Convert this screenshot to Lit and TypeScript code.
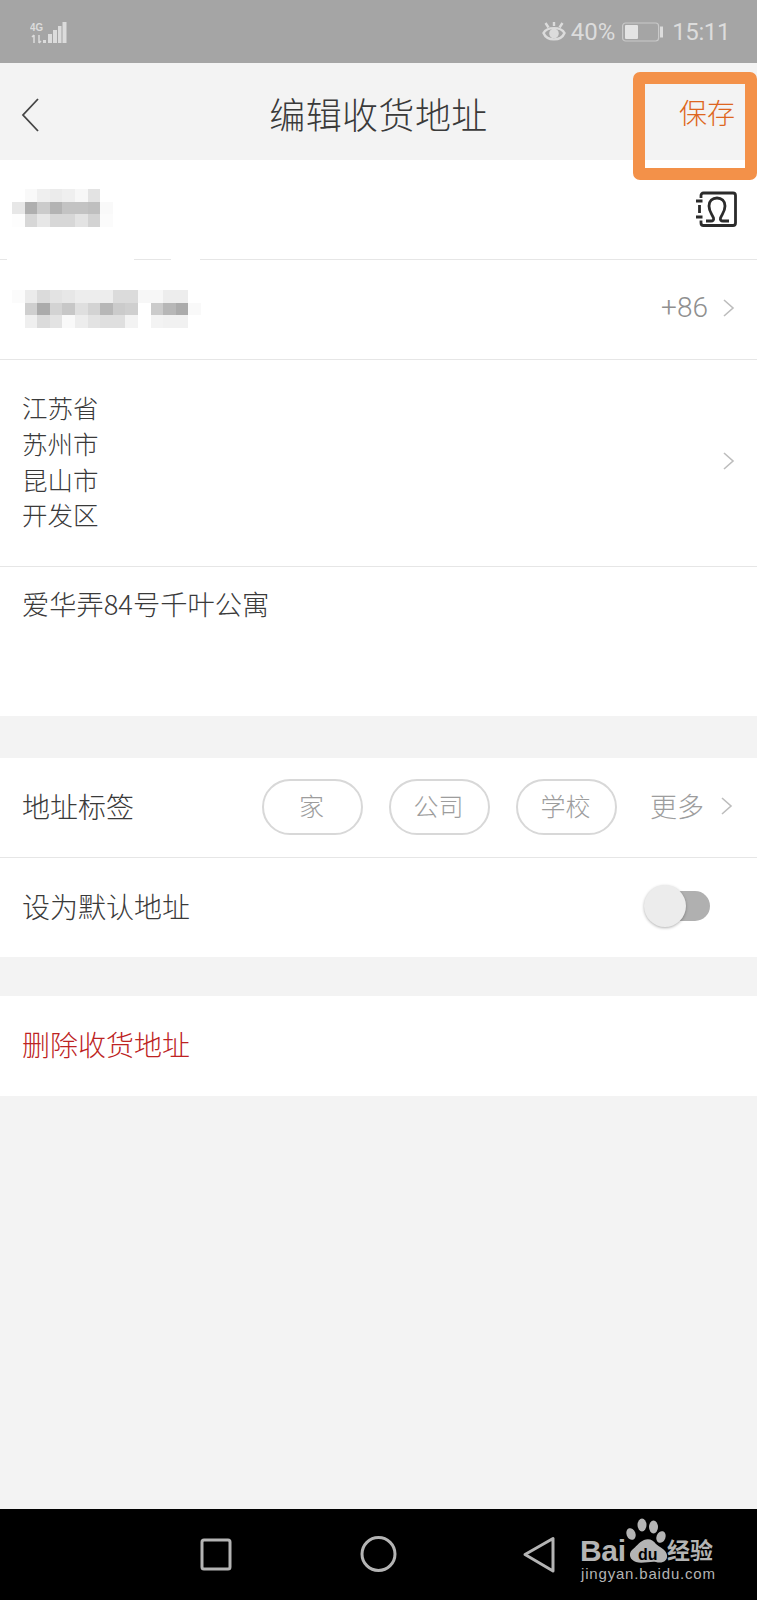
import { html, css, svg, LitElement } from 'lit';
import { customElement } from 'lit/decorators.js';

// grey levels of the pixelated name and phone, one array per row, 0 = white
const NAME_MOSAIC = [
  [0, 3, 8, 10, 8, 4, 14, 0, 0],
  [12, 40, 26, 38, 30, 30, 32, 3, 0],
  [1, 20, 12, 20, 20, 14, 22, 2, 0],
];
const PHONE_MOSAIC = [
  [2, 10, 18, 14, 12, 9, 9, 9, 18, 18, 4, 4, 9, 9, 0],
  [0, 24, 42, 22, 28, 16, 22, 36, 26, 24, 0, 26, 36, 42, 3],
  [0, 8, 18, 14, 3, 9, 14, 16, 16, 6, 0, 6, 7, 7, 0],
];

const chevron = html`<svg class="chevron" width="13" height="20" viewBox="0 0 13 20" fill="none">
  <path d="M2 2L11 10L2 18" stroke="#bdbdbd" stroke-width="1.6" />
</svg>`;

const mosaic = (rows: number[][], cls = '') => html`
  <div class="mosaic ${cls}" style="grid-template-columns: repeat(${rows[0].length}, 12.6px)">
    ${rows.flat().map((v) => html`<i style="background: rgb(${255 - v * 2}, ${255 - v * 2}, ${255 - v * 2})"></i>`)}
  </div>
`;

@customElement('app-root')
export class AppRoot extends LitElement {
  static override styles = css`
    :host {
      display: block;
      position: relative;
      height: 1600px;
      background: #f3f3f3;
      font-family: 'Noto Sans CJK SC', 'Liberation Sans', sans-serif;
      color: #3a3a3a;
      overflow: hidden;
    }

    .status {
      height: 63px;
      background: #a5a5a5;
      color: #dcdcdc;
      display: flex;
      align-items: center;
      justify-content: space-between;
      padding: 0 27px 0 30px;
      font-family: Roboto, 'Liberation Sans', sans-serif;
      font-size: 24px;
    }

    .status-right {
      display: flex;
      align-items: center;
    }

    .status-right .pct {
      margin: 0 7px 0 5px;
    }

    .status-right .time {
      margin-left: 9px;
      letter-spacing: -0.4px;
    }

    .signal-text {
      font-size: 11px;
      font-weight: 700;
      fill: #dcdcdc;
      font-family: 'Liberation Sans', sans-serif;
    }

    .header {
      height: 97px;
      display: flex;
      align-items: center;
      justify-content: space-between;
      padding: 6px 22px 0 20px;
      box-sizing: border-box;
      position: relative;
    }

    .header h1 {
      position: absolute;
      left: 0;
      right: 0;
      top: 24px;
      margin: 0;
      text-align: center;
      font-size: 36px;
      letter-spacing: 0.4px;
      line-height: 52px;
      font-weight: 300;
      color: #3a3a3a;
    }

    .save {
      font-size: 28px;
      font-weight: 300;
      color: #de6620;
      margin-top: -5px;
    }

    .highlight {
      position: absolute;
      left: 633px;
      top: 72px;
      width: 124px;
      height: 108px;
      box-sizing: border-box;
      border: 12px solid #f39149;
      border-radius: 7px;
    }

    .group {
      background: #fff;
    }

    .row {
      height: 100px;
      box-sizing: border-box;
      display: flex;
      align-items: center;
      padding: 0 22px 4px;
      border-bottom: 1px solid #e6e6e6;
      font-size: 28px;
      font-weight: 300;
    }

    /* the blur of the name also wipes parts of the divider under it */
    .row.smudged {
      border-image: linear-gradient(
          to right,
          #e6e6e6 8px,
          #fff 8px,
          #fff 135px,
          #e6e6e6 135px,
          #e6e6e6 172px,
          #fff 172px,
          #fff 200px,
          #e6e6e6 200px
        )
        1;
    }

    .row.short {
      height: 99px;
      border-bottom: none;
    }

    .mosaic {
      display: grid;
      grid-auto-rows: 12.6px;
      margin: 1px 0 0 -10px;
      flex: none;
    }

    .mosaic.phone {
      margin-top: 3px;
    }

    .contact {
      margin: 2px -2px 0 0;
    }

    .spacer {
      flex: 1;
    }

    .chevron {
      flex: none;
      margin-left: 14px;
    }

    .code {
      color: #8f8f8f;
      font-family: Roboto, 'Liberation Sans', sans-serif;
      font-size: 28px;
    }

    .row.region {
      height: 207px;
      padding-bottom: 5px;
      font-size: 25.5px;
      line-height: 35.7px;
    }

    .row.detail {
      height: 149px;
      align-items: flex-start;
      padding-top: 17px;
      font-size: 27.25px;
      line-height: 38px;
      border-bottom: none;
    }

    .gap-top {
      margin-top: 42px;
    }

    .gap-second {
      margin-top: 39px;
    }

    .tags {
      display: flex;
      gap: 26px;
      margin: 2px 0 0 auto;
    }

    .tag {
      width: 101px;
      height: 56px;
      box-sizing: border-box;
      border: 2px solid #d8d8d8;
      border-radius: 28px;
      display: flex;
      align-items: center;
      justify-content: center;
      padding: 0 2px 3px 0;
      font-size: 25px;
      color: #9d9d9d;
    }

    .more {
      margin-left: 33px;
      color: #9d9d9d;
      font-size: 27px;
    }

    .more + .chevron {
      margin: 0 2px 0 16px;
    }

    .switch {
      position: relative;
      width: 66px;
      height: 30px;
      margin-right: 25px;
    }

    .switch-track {
      position: absolute;
      inset: 0 0 0 4px;
      border-radius: 15px;
      background: #b0b0b0;
    }

    .switch-knob {
      position: absolute;
      left: 0;
      top: -6px;
      width: 42px;
      height: 42px;
      border-radius: 50%;
      background: #ececec;
      box-shadow: 0 1px 3px rgba(0, 0, 0, 0.3);
    }

    .row.delete {
      color: #bd2323;
      border-bottom: none;
    }

    .navbar {
      position: absolute;
      left: 0;
      right: 0;
      bottom: 0;
      height: 91px;
      background: #000;
    }

    .navbar svg {
      position: absolute;
      left: 0;
      top: 0;
    }

    .logo-big {
      font-family: 'Liberation Sans', sans-serif;
      font-weight: 700;
      font-size: 30px;
      fill: #b4b4b4;
    }

    .logo-du {
      font-family: 'Liberation Sans', sans-serif;
      font-weight: 700;
      font-size: 16px;
      fill: #000;
    }

    .logo-cn {
      font-family: 'Noto Sans CJK SC', sans-serif;
      font-size: 23px;
      font-weight: 700;
      fill: #b4b4b4;
    }

    .logo-url {
      font-family: 'Liberation Sans', sans-serif;
      font-size: 15px;
      fill: #b4b4b4;
    }
  `;

  private renderStatus() {
    return html`
      <div class="status">
        <svg width="38" height="26" viewBox="0 0 38 26">
          <text class="signal-text" x="0" y="12" textLength="13" lengthAdjust="spacingAndGlyphs">4G</text>
          <path d="M4 16V24M2 18L4 16M9 16V24M11 22L9 24" stroke="#dcdcdc" stroke-width="1.5" fill="none" />
          <rect x="13" y="21" width="3" height="3" fill="#dcdcdc" />
          <rect x="18" y="15" width="4" height="9" fill="#dcdcdc" />
          <rect x="23" y="11" width="4" height="13" fill="#dcdcdc" />
          <rect x="28" y="7" width="3.500" height="17" fill="#dcdcdc" />
          <rect x="32.500" y="3" width="4" height="21" fill="#dcdcdc" />
        </svg>
        <div class="status-right">
          <svg width="24" height="24" viewBox="0 0 24 24" fill="none" stroke="#dcdcdc" stroke-width="2.400">
            <path d="M1.500 13C5 6.500 19 6.500 22.500 13C19 21.500 5 21.500 1.500 13Z" />
            <circle cx="12" cy="13.500" r="3.600" fill="#dcdcdc" />
            <path d="M3.500 3L6.500 7.500M20.500 3L17.500 7.500M12 2V6" />
          </svg>
          <span class="pct">40%</span>
          <svg width="41" height="20" viewBox="0 0 41 20">
            <rect x="0.600" y="1" width="36" height="18" rx="3" fill="none" stroke="#c9c9c9" stroke-width="1.200" />
            <rect x="3" y="3" width="13" height="14" rx="1" fill="#e4e4e4" />
            <rect x="38" y="4.500" width="3" height="11" fill="#dcdcdc" />
          </svg>
          <span class="time">15:11</span>
        </div>
      </div>
    `;
  }

  private renderNav() {
    return html`
      <div class="navbar">
        <svg width="757" height="91" viewBox="0 0 757 91" fill="none" stroke="#b4b4b4" stroke-width="3">
          <rect x="202" y="31" width="28" height="29" rx="2" />
          <circle cx="378.500" cy="45" r="16.500" />
          <path d="M553 29.500V62L525 45.500Z" stroke-linejoin="round" />
          <g stroke="none" fill="#b4b4b4">
            ${svg`
              <text class="logo-big" x="580" y="52" textLength="46">Bai</text>
              <path d="M636 53C630 51 628 45 632 41C636 38 639 33 644 31C649 29 653 31 656 35C659 38 666 40 667 46C668 52 662 55 656 53C651 52 642 55 636 53Z" />
              <ellipse cx="631" cy="25" rx="4.500" ry="6" transform="rotate(-20 631 25)" />
              <ellipse cx="642" cy="16" rx="4.500" ry="6.500" />
              <ellipse cx="653.500" cy="18" rx="4.500" ry="6.500" />
              <ellipse cx="661" cy="28" rx="4.500" ry="6" transform="rotate(20 661 28)" />
              <text class="logo-du" x="638" y="51">du</text>
              <text class="logo-cn" x="667" y="50">经验</text>
              <text class="logo-url" x="581" y="70" textLength="134">jingyan.baidu.com</text>
            `}
          </g>
        </svg>
      </div>
    `;
  }

  override render() {
    return html`
      ${this.renderStatus()}
      <div class="header">
        <svg width="20" height="36" viewBox="0 0 20 36" fill="none">
          <path d="M18 2L3 18L18 34" stroke="#444" stroke-width="1.800" />
        </svg>
        <h1>编辑收货地址</h1>
        <span class="save">保存</span>
      </div>

      <div class="group">
        <div class="row smudged">
          ${mosaic(NAME_MOSAIC)}
          <span class="spacer"></span>
          <svg class="contact" width="41" height="36" viewBox="0 0 41 36" fill="none" stroke="#2b2b2b" stroke-width="2.800">
            <path d="M5 7V4.500C5 3 6 2 7.500 2H37C38.500 2 39.500 3 39.500 4.500V32C39.500 33.500 38.500 34.500 37 34.500H7.500C6 34.500 5 33.500 5 32V29.500" />
            <path d="M0 10H6.500M0 26H6.500M3.500 14V22" />
            <path d="M10 30H15C17 30 18 29 17.500 27C16 23 13 20.500 13 15C13 10 16.500 7 21 7C25.500 7 29 10 29 15C29 20.500 26 23 24.500 27C24 29 25 30 27 30H33" />
          </svg>
        </div>
        <div class="row">
          ${mosaic(PHONE_MOSAIC, 'phone')}
          <span class="spacer"></span>
          <span class="code">+86</span>
          ${chevron}
        </div>
        <div class="row region">
          <div>江苏省<br />苏州市<br />昆山市<br />开发区</div>
          <span class="spacer"></span>
          ${chevron}
        </div>
        <div class="row detail">爱华弄84号千叶公寓</div>
      </div>

      <div class="group gap-top">
        <div class="row">
          地址标签
          <div class="tags">
            <span class="tag">家</span>
            <span class="tag">公司</span>
            <span class="tag">学校</span>
          </div>
          <span class="more">更多</span>
          ${chevron}
        </div>
        <div class="row short">
          设为默认地址
          <span class="spacer"></span>
          <div class="switch">
            <div class="switch-track"></div>
            <div class="switch-knob"></div>
          </div>
        </div>
      </div>

      <div class="group gap-second">
        <div class="row delete">删除收货地址</div>
      </div>

      <div class="highlight"></div>
      ${this.renderNav()}
    `;
  }
}
